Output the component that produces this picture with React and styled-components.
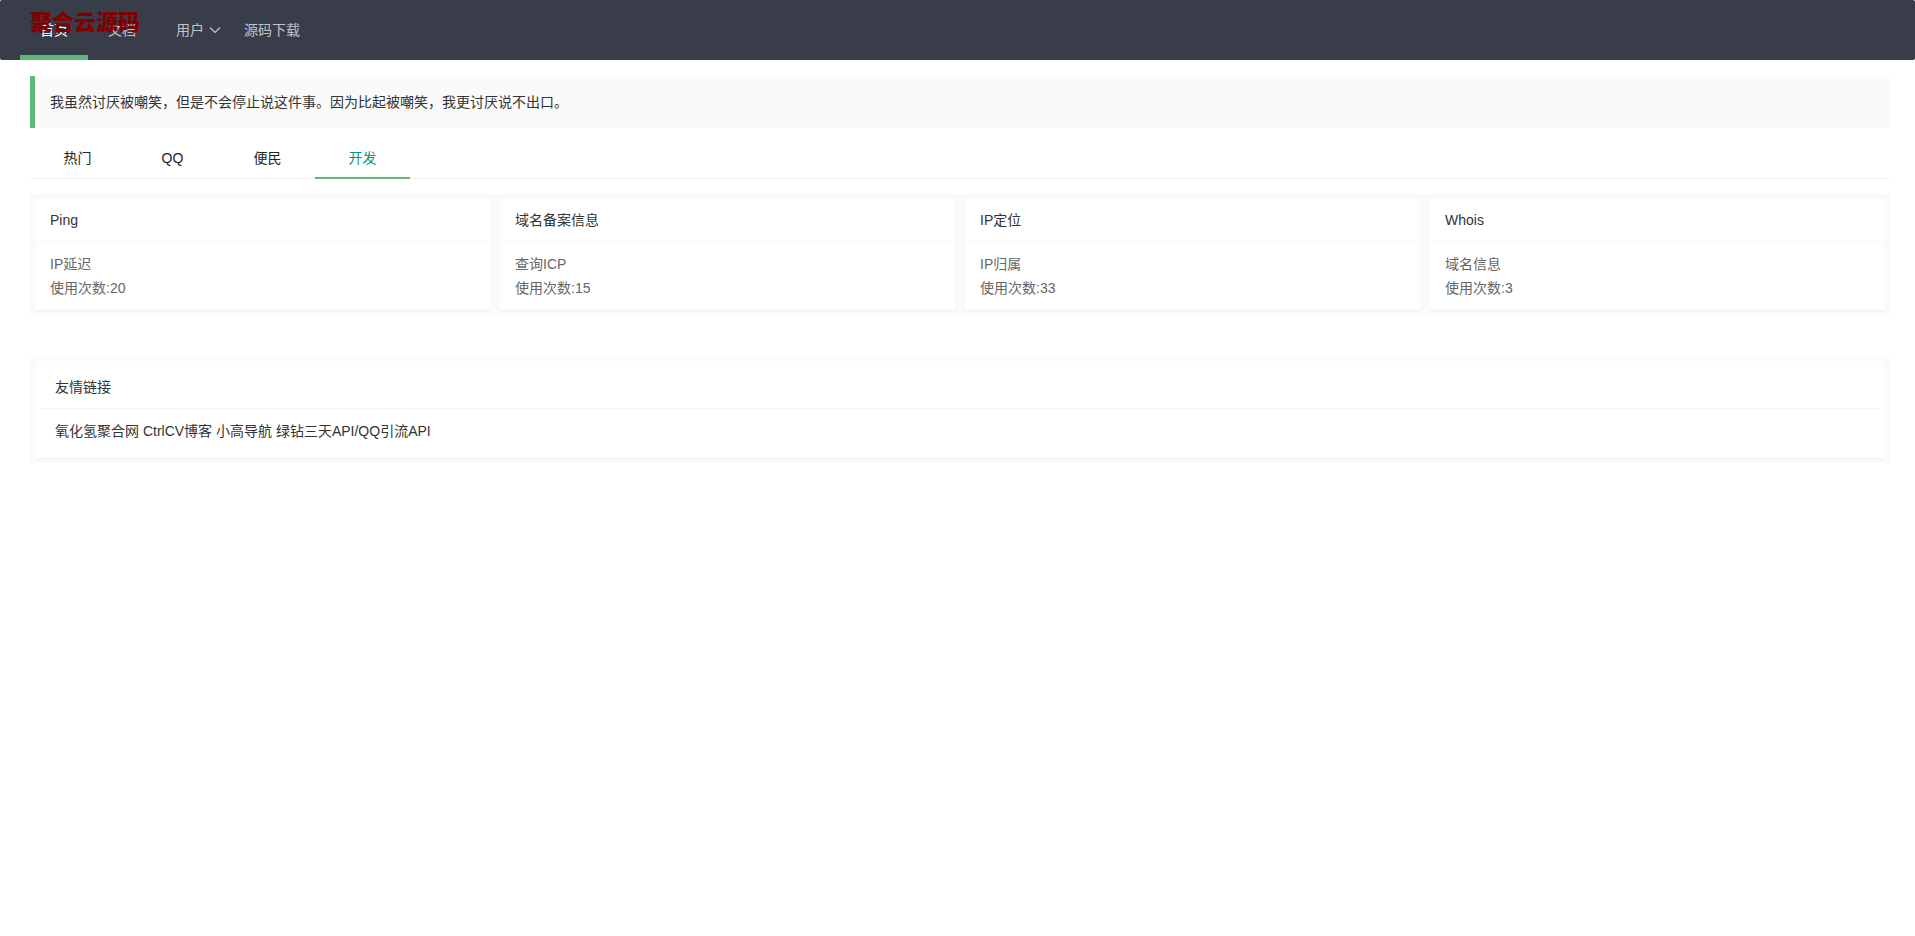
import React, { useState } from "react";
import styled, { createGlobalStyle } from "styled-components";

const GlobalStyle = createGlobalStyle`
  * {
    box-sizing: border-box;
  }
  body {
    margin: 0;
    background: #fff;
    color: #333;
    font-family: "Liberation Sans", "Noto Sans CJK SC", sans-serif;
    font-size: 14px;
    line-height: 24px;
  }
  a {
    color: inherit;
    text-decoration: none;
  }
`;

const Header = styled.header`
  position: relative;
  height: 60px;
  padding: 0 20px;
  border-radius: 2px;
  background: #393d49;
`;

const Logo = styled.a`
  position: absolute;
  z-index: 1;
  top: 12px;
  left: 30px;
  color: #800000;
  font-size: 22px;
  font-weight: 900;
  line-height: 22px;
`;

const Nav = styled.nav`
  display: flex;
`;

const NavLink = styled.a`
  position: relative;
  padding: 0 20px;
  border-bottom: 5px solid ${props => (props.$active ? "#5fb878" : "transparent")};
  color: ${props => (props.$active ? "#fff" : "rgba(255, 255, 255, 0.7)")};
  line-height: 60px;
  height: 60px;
`;

const Arrow = styled.svg`
  position: absolute;
  top: 25px;
  right: 3px;
  width: 12px;
  height: 10px;
`;

const Main = styled.main`
  padding: 16px 25px 0 30px;
`;

const Quote = styled.blockquote`
  margin: 0 0 10px;
  padding: 14px 15px;
  border-left: 5px solid #5fb878;
  border-radius: 0 2px 2px 0;
  background: #fafafa;
`;

const TabList = styled.div`
  display: flex;
  height: 41px;
  margin-bottom: 15px;
  border-bottom: 1px solid #eee;
`;

const Tab = styled.button`
  width: 95px;
  height: 41px;
  padding: 0 15px;
  border: 0;
  border-bottom: 2px solid ${props => (props.$active ? "#5fb878" : "transparent")};
  background: none;
  color: ${props => (props.$active ? "#009688" : "#222")};
  font: inherit;
  cursor: pointer;
`;

const CardGrid = styled.div`
  display: grid;
  grid-template-columns: repeat(4, 1fr);
  gap: 10px;
  padding: 5px;
  background: #fafafa;
`;

const Card = styled.article`
  border-radius: 2px;
  background: #fff;
  box-shadow: 0 1px 2px rgba(0, 0, 0, 0.05);
`;

const CardHeader = styled.h2`
  margin: 0;
  padding: 0 15px;
  border-bottom: 1px solid #f6f6f6;
  color: #333;
  font-size: 14px;
  font-weight: 400;
  line-height: 42px;
`;

const CardBody = styled.div`
  padding: 10px 15px;
  color: ${props => (props.$dark ? "#333" : "#666")};
`;

const Friends = styled.section`
  margin-top: 41px;
  padding: 5px;
  background: #fafafa;
`;

const FriendsCard = styled(Card)`
  padding: 5px;
`;

const tabs = ["热门", "QQ", "便民", "开发"];

const tools = [
  { name: "Ping", info: "IP延迟", count: 20 },
  { name: "域名备案信息", info: "查询ICP", count: 15 },
  { name: "IP定位", info: "IP归属", count: 33 },
  { name: "Whois", info: "域名信息", count: 3 }
];

const friends = ["氧化氢聚合网", "CtrlCV博客", "小高导航", "绿钻三天API/QQ引流API"];

const App = () => {
  const [tab, setTab] = useState("开发");

  return (
    <>
      <GlobalStyle />
      <Header>
        <Logo href="#">聚合云源码</Logo>
        <Nav>
          <NavLink href="#" $active>
            首页
          </NavLink>
          <NavLink href="#">文档</NavLink>
          <NavLink href="#">
            用户
            <Arrow viewBox="0 0 12 10" fill="none" stroke="currentColor">
              <path d="M1 2.5 L6 7.5 L11 2.5" strokeWidth="1.2" />
            </Arrow>
          </NavLink>
          <NavLink href="#">源码下载</NavLink>
        </Nav>
      </Header>
      <Main>
        <Quote>
          我虽然讨厌被嘲笑，但是不会停止说这件事。因为比起被嘲笑，我更讨厌说不出口。
        </Quote>
        <TabList role="tablist">
          {tabs.map(name => (
            <Tab
              key={name}
              type="button"
              role="tab"
              aria-selected={name === tab}
              $active={name === tab}
              onClick={() => setTab(name)}
            >
              {name}
            </Tab>
          ))}
        </TabList>
        <CardGrid>
          {tools.map(tool => (
            <Card key={tool.name}>
              <CardHeader>{tool.name}</CardHeader>
              <CardBody>
                <div>{tool.info}</div>
                <div>使用次数:{tool.count}</div>
              </CardBody>
            </Card>
          ))}
        </CardGrid>
        <Friends>
          <FriendsCard>
            <CardHeader>友情链接</CardHeader>
            <CardBody $dark>
              {friends.map(name => (
                <React.Fragment key={name}>
                  <a href="#">{name}</a>{" "}
                </React.Fragment>
              ))}
            </CardBody>
          </FriendsCard>
        </Friends>
      </Main>
    </>
  );
};

export default App;
